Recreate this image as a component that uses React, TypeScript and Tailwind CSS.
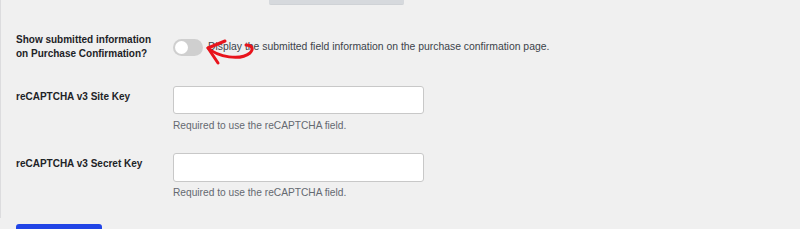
export default function App() {
  return (
    <div className="relative h-[229px] overflow-hidden bg-[#f0f0f0] font-['Liberation_Sans',Arial,sans-serif]">
      <div className="border-l border-[#dcdcde] pb-[18px]">
        {/* tab strip, cut off at the top */}
        <div className="flex h-[5px]">
          <div className="ml-[268px] w-[135px] rounded-b-[2px] border-b border-[#cfd2d6] bg-[#d6d9dd]" />
        </div>

        <div className="pt-[28px]">
          <div className="flex">
            <div className="w-[172px] pl-[15px] text-[10px] font-bold leading-[14px] text-[#1d2327]">
              Show submitted information
              <br />
              on Purchase Confirmation?
            </div>
            <div className="relative flex h-[28px] items-center gap-[5px]">
              <span className="flex h-[17px] w-[30px] items-center rounded-full bg-[#cfcfcf] px-[2px]">
                <span className="h-[13px] w-[13px] rounded-full bg-white" />
              </span>
              <span className="text-[10.4px] leading-[14px] text-[#3c434a]">
                Display the submitted field information on the purchase confirmation page.
              </span>
              <svg
                className="absolute left-[27px] top-[0px] h-[36px] w-[60px]"
                viewBox="0 0 60 36"
                fill="none"
                stroke="#e8141c"
                strokeWidth="3"
                strokeLinecap="round"
                strokeLinejoin="round"
              >
                <path d="M25 8 L8 15 L18 30" />
                <path d="M8 15 C18 24, 40 28, 50 20 C54 16, 52 12, 46 12" />
              </svg>
            </div>
          </div>

          <div className="mt-[25px] flex">
            <div className="w-[172px] pl-[15px] pt-[4px] text-[10px] font-bold leading-[14px] text-[#1d2327]">
              reCAPTCHA v3 Site Key
            </div>
            <div>
              <input className="block h-[28px] w-[251px] rounded-[3px] border border-[#c8c8c8] bg-white" />
              <p className="mt-[5px] text-[10.2px] leading-[14px] text-[#646970]">
                Required to use the reCAPTCHA field.
              </p>
            </div>
          </div>

          <div className="mt-[20px] flex">
            <div className="w-[172px] pl-[15px] pt-[4px] text-[10px] font-bold leading-[14px] text-[#1d2327]">
              reCAPTCHA v3 Secret Key
            </div>
            <div>
              <input className="block h-[29px] w-[251px] rounded-[3px] border border-[#c8c8c8] bg-white" />
              <p className="mt-[4px] text-[10.2px] leading-[14px] text-[#646970]">
                Required to use the reCAPTCHA field.
              </p>
            </div>
          </div>
        </div>
      </div>

      <div className="ml-4 mt-[6px] h-[30px] w-[86px] rounded-[3px] bg-[#2145e6]" />
    </div>
  )
}
